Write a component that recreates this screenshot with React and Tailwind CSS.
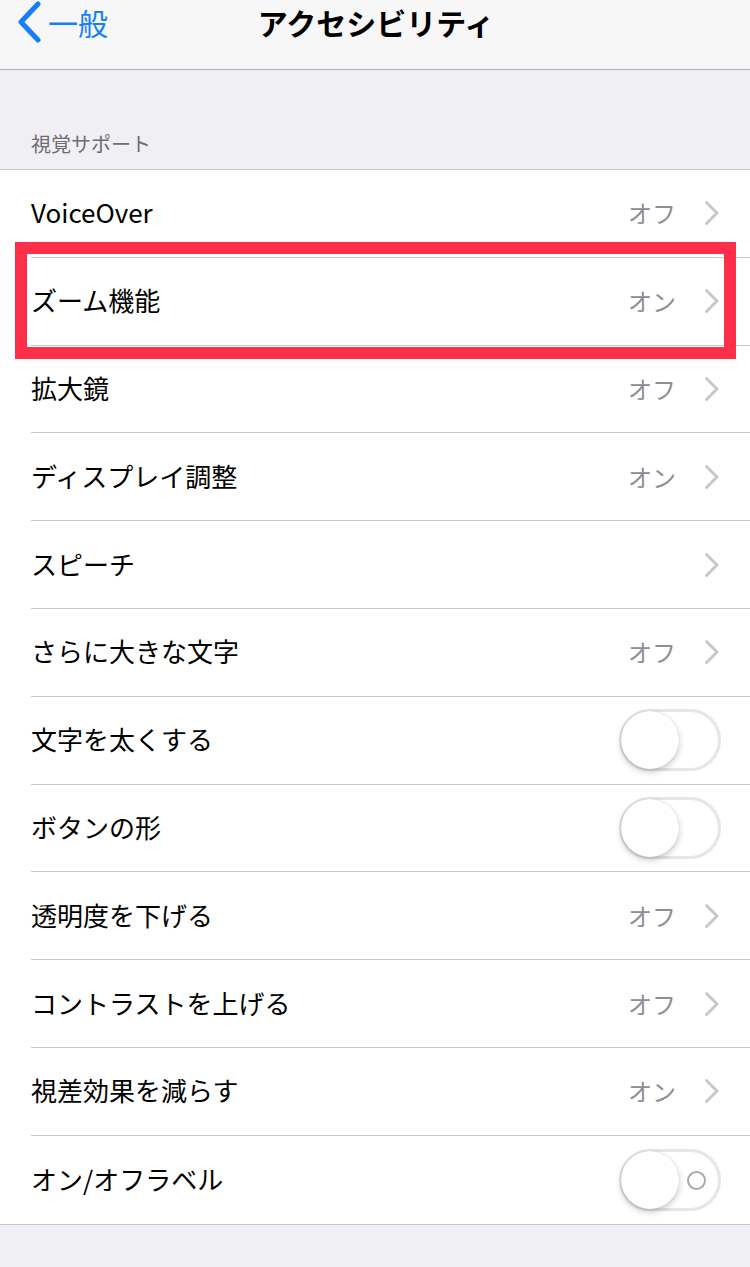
const FONT = { fontFamily: '"Noto Sans CJK JP", "Noto Sans", sans-serif' }

const ROWS = [
  { label: 'VoiceOver', value: 'オフ' },
  { label: 'ズーム機能', value: 'オン' },
  { label: '拡大鏡', value: 'オフ' },
  { label: 'ディスプレイ調整', value: 'オン' },
  { label: 'スピーチ', value: '' },
  { label: 'さらに大きな文字', value: 'オフ' },
  { label: '文字を太くする', toggle: true },
  { label: 'ボタンの形', toggle: true },
  { label: '透明度を下げる', value: 'オフ' },
  { label: 'コントラストを上げる', value: 'オフ' },
  { label: '視差効果を減らす', value: 'オン' },
  { label: 'オン/オフラベル', toggle: true, ring: true },
]

export default function App() {
  return (
    <div className="w-[750px] h-[1267px] bg-[#efeff4] relative overflow-hidden" style={FONT}>

      {/* ── Nav bar ── */}
      <div className="h-[70px] bg-[#f7f7f7] border-b border-[#b2b2b2] relative flex items-center">
        <div className="flex items-center pl-[16px] pb-[26px] text-[#157efb]">
          <BackIcon />
          <span className="text-[30px] leading-none ml-[6px]">一般</span>
        </div>
        <div className="absolute left-0 right-0 top-[2px] text-center text-[30px] font-bold leading-[40px] text-black pl-[2px]">
          アクセシビリティ
        </div>
      </div>

      {/* Section header */}
      <div className="h-[99px] flex items-end pl-[31px] pb-[15px] text-[20px] text-[#6d6d72] leading-none">
        視覚サポート
      </div>

      {/* ── List ── */}
      <div className="bg-white border-t border-b border-[#c8c7cc]">
        {ROWS.map((r, i) => (
          <div key={r.label} className="pl-[31px]">
            <div
              className={
                'flex items-center pr-[30px] ' +
                (i < ROWS.length - 1 ? 'h-[87.8px] border-b border-[#c8c7cc]' : 'h-[88px]')
              }
            >
              <span className="text-[26px] text-black leading-none flex-1 -mt-[2px]">{r.label}</span>
              {r.toggle ? (
                <Toggle ring={r.ring} />
              ) : (
                <div className="flex items-center">
                  <span className="text-[24px] text-[#8e8e93] leading-none mr-[28px]">{r.value}</span>
                  <ChevronIcon />
                </div>
              )}
            </div>
          </div>
        ))}
      </div>

      {/* Highlight */}
      <div className="absolute left-[15px] top-[242px] w-[721px] h-[117px] border-[12px] border-[#fd2f48] pointer-events-none" />
    </div>
  )
}

function BackIcon() {
  return (
    <svg width="26" height="42" viewBox="0 0 26 42" fill="none">
      <path d="M22 3L5 21l17 18" stroke="currentColor" strokeWidth="5" strokeLinecap="round" strokeLinejoin="round" />
    </svg>
  )
}

function ChevronIcon() {
  return (
    <svg width="16" height="26" viewBox="0 0 16 26" fill="none">
      <path d="M2.5 2.5L13 13 2.5 23.5" stroke="#c7c7cc" strokeWidth="3" strokeLinecap="round" strokeLinejoin="round" />
    </svg>
  )
}

function Toggle({ ring }) {
  return (
    <div className="relative w-[102px] h-[62px] rounded-full border-[3px] border-[#e5e5ea] bg-white mr-[-1px]">
      <div className="absolute left-[-1px] top-[-1px] w-[58px] h-[58px] rounded-full bg-white shadow-[0_3px_6px_rgba(0,0,0,0.22),0_0_1px_rgba(0,0,0,0.2)]" />
      {ring && (
        <div className="absolute right-[12px] top-[19px] w-[19px] h-[19px] rounded-full border-2 border-[#a9a9ae]" />
      )}
    </div>
  )
}
